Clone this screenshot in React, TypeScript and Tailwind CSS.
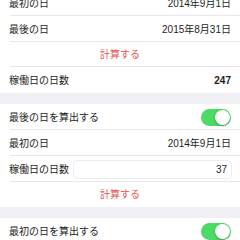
import React from "react";

const font = { fontFamily: '"Liberation Sans", "Noto Sans CJK JP", sans-serif' };

function Toggle() {
  return (
    <div className="relative w-[30px] h-[17px] rounded-full bg-[#4cd964]">
      <div className="absolute right-[1px] top-[1px] w-[15px] h-[15px] rounded-full bg-white shadow-[0_1px_2px_rgba(0,0,0,0.3)]" />
    </div>
  );
}

function Row({
  h,
  children,
  sep = true,
  className = "",
}: {
  h: string;
  children: React.ReactNode;
  sep?: boolean;
  className?: string;
}) {
  return (
    <div className={`relative bg-white ${h}`}>
      <div className={`flex items-center h-full pl-[9px] pr-[9px] ${className}`}>{children}</div>
      {sep && <div className="absolute left-[10px] right-0 bottom-0 h-px bg-[#e8e8eb]" />}
    </div>
  );
}

export default function App() {
  return (
    <div className="w-[240px] h-[240px] overflow-hidden bg-[#efeff4] text-[10px] text-[#1e1e1e]" style={font}>
      <div className="-mt-[10px] flex flex-col">
        <Row h="h-[26px]" className="justify-between">
          <span>最初の日</span>
          <span>2014年9月1日</span>
        </Row>
        <Row h="h-[26px]" className="justify-between">
          <span>最後の日</span>
          <span>2015年8月31日</span>
        </Row>
        <Row h="h-[25px]" className="justify-center">
          <span className="text-[#e5574c]">計算する</span>
        </Row>
        <Row h="h-[26px]" sep={false} className="justify-between">
          <span>稼働日の日数</span>
          <span className="font-bold">247</span>
        </Row>
        <div className="h-[11px]" />
        <Row h="h-[26px]" className="justify-between">
          <span>最後の日を算出する</span>
          <Toggle />
        </Row>
        <Row h="h-[26px]" className="justify-between">
          <span>最初の日</span>
          <span>2014年9月1日</span>
        </Row>
        <Row h="h-[26px]" className="justify-between gap-[4px]">
          <span className="shrink-0">稼働日の日数</span>
          <div className="w-[160px] h-[19px] rounded-[4px] border border-[#ececee] flex items-center justify-end pr-[4px] -mr-[1px]">
            37
          </div>
        </Row>
        <Row h="h-[25px]" sep={false} className="justify-center">
          <span className="text-[#e5574c]">計算する</span>
        </Row>
        <div className="h-[11px]" />
        <Row h="h-[26px]" className="justify-between">
          <span>最初の日を算出する</span>
          <Toggle />
        </Row>
      </div>
    </div>
  );
}
